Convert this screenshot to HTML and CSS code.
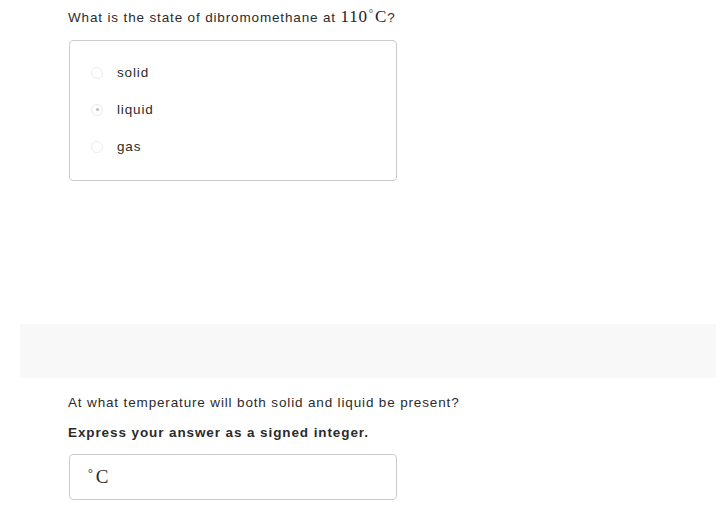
FILE: index.html
```html
<!DOCTYPE html>
<html>
<head>
<meta charset="utf-8">
<link rel="stylesheet" href="styles.css">
</head>
<body>
<div class="page">
  <p class="question">What is the state of dibromomethane at <span class="math">110<span class="deg">°</span>C</span>?</p>
  <div class="choices">
    <label class="choice"><span class="radio"></span><span class="label">solid</span></label>
    <label class="choice"><span class="radio checked"></span><span class="label">liquid</span></label>
    <label class="choice"><span class="radio"></span><span class="label">gas</span></label>
  </div>
  <div class="band"></div>
  <p class="question q2">At what temperature will both solid and liquid be present?</p>
  <p class="instr">Express your answer as a signed integer.</p>
  <div class="answer"><span class="unit"><span class="deg">°</span>C</span></div>
</div>
</body>
</html>
```

FILE: styles.css
```css
html, body {
  margin: 0;
  padding: 0;
  background: #ffffff;
}
.page {
  padding-top: 8px;
  font-family: "Liberation Sans", Arial, sans-serif;
  color: #2b2b2b;
}
.question {
  margin: 0 0 0 68px;
  height: 20px;
  font-size: 13.5px;
  line-height: 20px;
  letter-spacing: 0.85px;
  color: #2b2b2b;
  white-space: nowrap;
}
.math {
  font-family: "Liberation Serif", "Times New Roman", serif;
  font-size: 17px;
  line-height: 1;
  letter-spacing: 0.8px;
  color: #222;
}
.deg {
  font-size: 11px;
  line-height: 0;
  position: relative;
  top: -5px;
  margin: 0 1px;
}
.choices {
  margin: 12px 0 0 69px;
  width: 305px;
  border: 1px solid #cccccc;
  border-radius: 4px;
  padding: 13px 0 15px 21px;
  box-sizing: content-box;
}
.choice {
  display: flex;
  align-items: center;
  height: 37px;
}
.radio {
  width: 12px;
  height: 12px;
  border: 1px solid #ececec;
  border-radius: 50%;
  margin-right: 14px;
  position: relative;
  box-sizing: border-box;
}
.radio.checked::after {
  content: "";
  position: absolute;
  left: 3.5px;
  top: 3.5px;
  width: 3px;
  height: 3px;
  border-radius: 50%;
  background: #bbbbbb;
}
.label {
  font-size: 13.5px;
  letter-spacing: 0.85px;
  color: #2b2b2b;
}
.band {
  margin: 143px 4px 0 20px;
  height: 54px;
  background: #f8f8f8;
}
.q2 {
  margin-top: 15px;
}
.instr {
  margin: 10px 0 0 68px;
  font-size: 13.5px;
  line-height: 20px;
  letter-spacing: 0.9px;
  font-weight: bold;
  color: #2b2b2b;
}
.answer {
  margin: 11px 0 0 69px;
  width: 308px;
  height: 44px;
  border: 1px solid #cccccc;
  border-radius: 4px;
  display: flex;
  align-items: center;
  padding-left: 18px;
  box-sizing: content-box;
}
.unit {
  font-family: "Liberation Serif", "Times New Roman", serif;
  font-size: 19px;
  color: #2b2b2b;
}
.unit .deg {
  font-size: 12px;
  top: -6px;
  margin: 0 3px 0 0;
}
```
